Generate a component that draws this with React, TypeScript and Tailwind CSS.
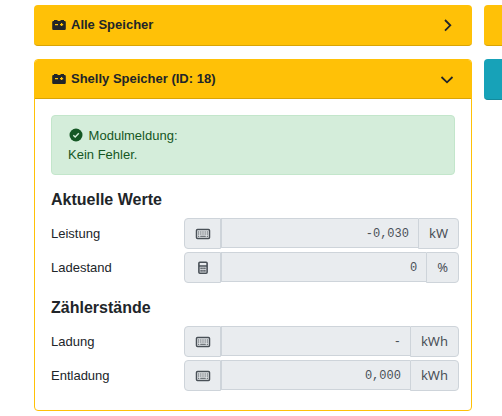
import React from 'react';

interface Reading {
  id: string;
  label: string;
  icon: 'keyboard' | 'calculator';
  value: string;
  unit: string;
}

const currentValues: Reading[] = [
  { id: 'power', label: 'Leistung', icon: 'keyboard', value: '-0,030', unit: 'kW' },
  { id: 'soc', label: 'Ladestand', icon: 'calculator', value: '0', unit: '%' }
];

const meterReadings: Reading[] = [
  { id: 'imported', label: 'Ladung', icon: 'keyboard', value: '-', unit: 'kWh' },
  { id: 'exported', label: 'Entladung', icon: 'keyboard', value: '0,000', unit: 'kWh' }
];

const BatteryIcon: React.FC = () => (
  <svg className="h-3.5 w-3.5 shrink-0" viewBox="0 0 14 14" fill="currentColor" aria-hidden="true">
    <path
      fillRule="evenodd"
      d="M2 2h3.500v1h3V2H12v1h.7A1.200 1.200 0 0 1 13.800 4.200v6.600A1.200 1.200 0 0 1 12.600 12H1.400A1.200 1.200 0 0 1 .2 10.800V4.200A1.200 1.200 0 0 1 1.400 3H2zM3 6v1.200h3V6zM9 5v1H8v1.200h1V8h1.200v-.8h1V6h-1V5z"
    />
  </svg>
);

const CheckIcon: React.FC = () => (
  <svg className="mr-0.5 ml-px inline h-3.5 w-3.5 align-[-2px]" viewBox="0 0 14 14" aria-hidden="true">
    <circle cx="7" cy="7" r="6.500" fill="currentColor" />
    <path d="M4.300 7.200 6.200 9l3.600-3.700" fill="none" stroke="#d4edda" strokeWidth="1.400" />
  </svg>
);

const KeyboardIcon: React.FC = () => (
  <svg className="h-3 w-4" viewBox="0 0 16 12" fill="none" stroke="currentColor" aria-hidden="true">
    <rect x="1.500" y="1.500" width="13" height="9" rx="1" strokeWidth="1.500" />
    <path d="M3 4h10M3 6h10" strokeWidth="1.100" strokeDasharray="1.300 .87" />
    <path d="M3 8.200h1.300M5.200 8.200h5.600M11.700 8.200H13" strokeWidth="1.100" />
  </svg>
);

const CalculatorIcon: React.FC = () => (
  <svg className="h-3.5 w-3" viewBox="0 0 12 14" fill="none" stroke="currentColor" aria-hidden="true">
    <rect x="1.900" y="1.300" width="8.200" height="11" rx="1" strokeWidth="1.600" />
    <path d="M2 5h8" strokeWidth="1.500" />
    <path d="M3.400 7.400h5.200M3.400 9.900h5.200" strokeWidth="1.600" strokeDasharray="1.400 .5" />
  </svg>
);

const CardHeader: React.FC<{ title: string; open?: boolean }> = ({ title, open = false }) => (
  <button
    type="button"
    aria-expanded={open}
    className={`flex w-full items-center gap-[5px] border-b border-[#d9a406] bg-[#ffc107] pr-4 text-left text-[13px] leading-5 font-bold ${open ? 'h-[39px] pl-[17px]' : 'h-[41px] rounded pb-px pl-[18px]'}`}
  >
    <BatteryIcon />
    <span className="flex-1">{title}</span>
    <svg className="h-4 w-4" viewBox="0 0 16 16" fill="none" stroke="currentColor" strokeWidth="1.800" aria-hidden="true">
      <path d={open ? 'M2.500 6 8 11.300 13.500 6' : 'M5 3 10.300 8.300 5 13.600'} />
    </svg>
  </button>
);

const ReadingRow: React.FC<{ reading: Reading }> = ({ reading }) => (
  <div className="flex items-center">
    <label htmlFor={reading.id} className="w-[133px] shrink-0">
      {reading.label}
    </label>
    <div className="flex h-[31px] min-w-0 flex-1 items-start text-[#495057]">
      <span className="flex h-full w-[37px] shrink-0 items-center justify-center rounded-l border border-[#ced4da] bg-[#e9ecef]">
        {reading.icon === 'keyboard' ? <KeyboardIcon /> : <CalculatorIcon />}
      </span>
      <input
        id={reading.id}
        readOnly
        value={reading.value}
        className="h-[30px] min-w-0 flex-1 border-y border-l border-[#ced4da] bg-[#e9ecef] px-[9px] pt-0.5 text-right font-['Liberation_Mono',monospace] text-[12px] outline-none"
      />
      <span className="flex h-full shrink-0 items-center rounded-r border border-[#ced4da] bg-[#e9ecef] px-2.5 font-['Noto_Sans',sans-serif] text-[13px]">
        {reading.unit}
      </span>
    </div>
  </div>
);

const ReadingGroup: React.FC<{ title: string; readings: Reading[] }> = ({ title, readings }) => (
  <section className="-mr-1">
    <h2 className="mb-2 text-[16px] leading-5 font-bold">{title}</h2>
    <div className="flex flex-col gap-[3px]">
      {readings.map((reading) => (
        <ReadingRow key={reading.id} reading={reading} />
      ))}
    </div>
  </section>
);

const App: React.FC = () => (
  <div className="flex items-start gap-3 overflow-hidden bg-white pt-[5px] pl-[34px] font-['Liberation_Sans',Arial,sans-serif] text-[13px] text-[#212529]">
    <main className="flex min-w-0 flex-1 flex-col gap-[13px]">
      <CardHeader title="Alle Speicher" />

      <article className="overflow-hidden rounded border border-[#ffc107]">
        <CardHeader title="Shelly Speicher (ID: 18)" open />
        <div className="flex flex-col gap-[15px] px-4 pt-4 pb-[19px]">
          <div role="status" className="rounded border border-[#c3e6cb] bg-[#d4edda] px-4 py-[10px] leading-[19px] text-[#155724]">
            <p>
              <CheckIcon /> Modulmeldung:
            </p>
            <p>Kein Fehler.</p>
          </div>
          <ReadingGroup title="Aktuelle Werte" readings={currentValues} />
          <ReadingGroup title="Zählerstände" readings={meterReadings} />
        </div>
      </article>
    </main>

    {/* Start of the next column */}
    <aside className="flex w-[18px] shrink-0 flex-col gap-[13px]">
      <div className="h-[41px] rounded-l border-b border-[#d9a406] bg-[#ffc107]" />
      <div className="h-[41px] rounded-l border-b border-[#148a9c] bg-[#17a2b8]" />
    </aside>
  </div>
);

export default App;
